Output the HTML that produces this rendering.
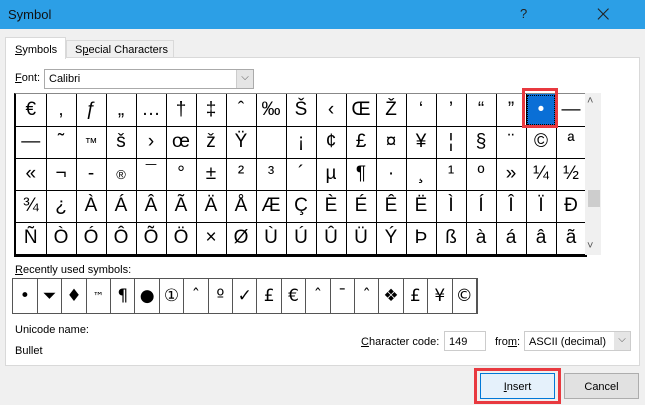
<!DOCTYPE html><html><head><style>
*{box-sizing:border-box;margin:0;padding:0}
body{width:645px;height:405px;background:#f0f0f0;font-family:"Liberation Sans",sans-serif;font-size:11px;color:#000;position:relative;overflow:hidden}
.a{position:absolute}
.title{left:0;top:0;width:645px;height:29px;background:#2c9fe6;color:#111;font-size:13px;padding:7px 0 0 8px}
.panel{left:5px;top:57px;width:635px;height:309px;background:#fff;border:1px solid #d9d9d9}
.grid{left:14px;top:93px;border-top:1px solid #888;border-left:2px solid #000;border-bottom:2px solid #000}
.grid table,.rec table{border-collapse:collapse}
.grid td{width:30px;height:32px;border-right:1px solid #000;border-bottom:1px solid #000;text-align:center;vertical-align:middle;font-size:19px;font-family:"Liberation Sans","DejaVu Sans",sans-serif}
.rec{left:12px;top:278px;border:1px solid #555}
.rec td{width:24.4px;height:34px;border-right:1px solid #555;text-align:center;font-size:17px;font-family:"DejaVu Sans",sans-serif}
.btn{border:1px solid #adadad;background:#e1e1e1;text-align:center;font-size:11px;padding-top:7px}
</style></head><body>
<div class="a title">Symbol</div>
<div class="a" style="left:520px;top:6px;font-size:13px;color:#222">?</div>
<div class="a" style="left:594px;top:2px;font-size:22px;color:#222;font-family:'DejaVu Sans',sans-serif;font-weight:200">×</div>
<div class="a panel"></div>
<div class="a" style="left:5px;top:37px;width:61px;height:22px;background:#fff;border:1px solid #d9d9d9;border-bottom:none;padding:6px 0 0 9px"><u>S</u>ymbols</div>
<div class="a" style="left:66px;top:40px;width:108px;height:18px;background:#f0f0f0;border:1px solid #d9d9d9;padding:3px 0 0 8px">S<u>p</u>ecial Characters</div>
<div class="a" style="left:15px;top:72px"><u>F</u>ont:</div>
<div class="a" style="left:44px;top:69px;width:210px;height:20px;border:1px solid #aaa;padding:3px 0 0 4px">Calibri</div>
<div class="a" style="left:236px;top:70px;width:17px;height:18px;background:#e5e5e5;border-left:1px solid #ccc;text-align:center;font-size:10px;color:#555;padding-top:2px">⌵</div>
<div class="a grid"><table>
<tr><td>€</td><td>‚</td><td>ƒ</td><td>„</td><td>…</td><td>†</td><td>‡</td><td>ˆ</td><td>‰</td><td>Š</td><td>‹</td><td>Œ</td><td>Ž</td><td>‘</td><td>’</td><td>“</td><td>”</td><td style="background:#0a6fd6;color:#fff;outline:1px dotted #000;outline-offset:-2px">•</td><td>—</td></tr>
<tr><td>—</td><td>˜</td><td style="font-size:13px">™</td><td>š</td><td>›</td><td>œ</td><td>ž</td><td>Ÿ</td><td>&nbsp;</td><td>¡</td><td>¢</td><td>£</td><td>¤</td><td>¥</td><td>¦</td><td>§</td><td>¨</td><td>©</td><td>ª</td></tr>
<tr><td>«</td><td>¬</td><td>-</td><td style="font-size:13px">®</td><td>¯</td><td>°</td><td>±</td><td>²</td><td>³</td><td>´</td><td>µ</td><td>¶</td><td>·</td><td>¸</td><td>¹</td><td>º</td><td>»</td><td>¼</td><td>½</td></tr>
<tr><td>¾</td><td>¿</td><td>À</td><td>Á</td><td>Â</td><td>Ã</td><td>Ä</td><td>Å</td><td>Æ</td><td>Ç</td><td>È</td><td>É</td><td>Ê</td><td>Ë</td><td>Ì</td><td>Í</td><td>Î</td><td>Ï</td><td>Ð</td></tr>
<tr><td>Ñ</td><td>Ò</td><td>Ó</td><td>Ô</td><td>Õ</td><td>Ö</td><td>×</td><td>Ø</td><td>Ù</td><td>Ú</td><td>Û</td><td>Ü</td><td>Ý</td><td>Þ</td><td>ß</td><td>à</td><td>á</td><td>â</td><td>ã</td></tr>
</table></div>
<div class="a" style="left:522px;top:88px;width:36px;height:40px;border:3px solid #e8393f"></div>
<div class="a" style="left:585px;top:93px;width:16px;height:162px;background:#f0f0f0"></div>
<div class="a" style="left:587px;top:95px;font-size:11px;color:#555">˄</div>
<div class="a" style="left:588px;top:190px;width:12px;height:17px;background:#cdcdcd"></div>
<div class="a" style="left:587px;top:240px;font-size:11px;color:#555">˅</div>
<div class="a" style="left:15px;top:264px"><u>R</u>ecently used symbols:</div>
<div class="a rec"><table><tr><td>•</td><td>⏷</td><td>♦</td><td style="font-size:11px">™</td><td>¶</td><td>●</td><td>①</td><td>ˆ</td><td>º</td><td>✓</td><td>£</td><td>€</td><td>ˆ</td><td>¯</td><td>ˆ</td><td>❖</td><td>£</td><td>¥</td><td>©</td></tr></table></div>
<div class="a" style="left:15px;top:324px">Unicode name:</div>
<div class="a" style="left:15px;top:345px">Bullet</div>
<div class="a" style="left:361px;top:336px"><u>C</u>haracter code:</div>
<div class="a" style="left:444px;top:331px;width:42px;height:20px;border:1px solid #ccc;background:#fff;padding:4px 0 0 4px">149</div>
<div class="a" style="left:495px;top:336px">fro<u>m</u>:</div>
<div class="a" style="left:524px;top:331px;width:107px;height:20px;border:1px solid #ccc;background:#fff;padding:4px 0 0 4px">ASCII (decimal)</div>
<div class="a" style="left:614px;top:332px;width:16px;height:18px;background:#e5e5e5;font-size:10px;color:#555;text-align:center;padding-top:2px">⌵</div>
<div class="a btn" style="left:480px;top:373px;width:75px;height:26px;background:#e5f1fb;border-color:#0078d7"><u>I</u>nsert</div>
<div class="a" style="left:474px;top:368px;width:87px;height:36px;border:3px solid #e8393f"></div>
<div class="a btn" style="left:564px;top:373px;width:75px;height:26px">Cancel</div>
</body></html>
